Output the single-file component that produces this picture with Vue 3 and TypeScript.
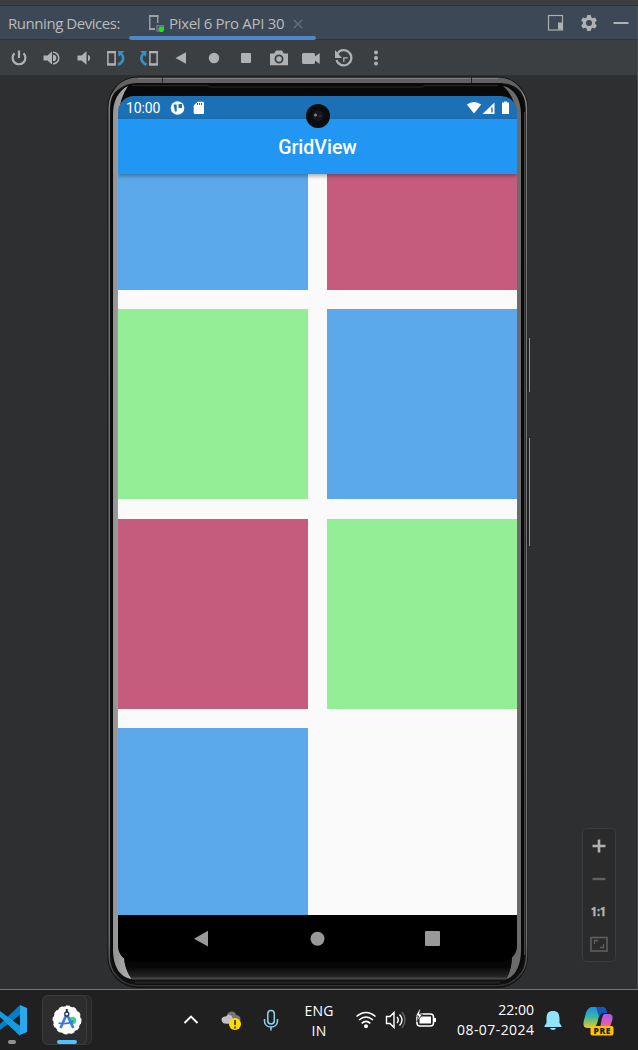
<script setup lang="ts">
const tiles: string[] = ['blue', 'rose', 'green', 'blue', 'rose', 'green', 'blue']
</script>

<template>
  <main class="desktop">
    <div class="strip"></div>
    <header class="tabs">
      <span class="caption">Running Devices:</span>
      <div class="tab">
        <svg class="tab-device" width="17" height="19" viewBox="0 0 17 19">
          <path d="M7 15H1.8V1.8H9.700V9" fill="none" stroke="#9ba3aa" stroke-width="1.4" />
          <path d="M1 1h9.400v2H1zM1 14h6v2H1z" fill="#9ba3aa" />
          <path d="M9 17V11.7h6.5V14M8.300 17H11" fill="none" stroke="#8566a5" stroke-width="1.4" />
          <circle cx="13.3" cy="15.2" r="2.800" fill="#00f800" />
        </svg>
        <span class="tab-name">Pixel 6 Pro API 30</span>
        <svg class="close" width="10" height="10" viewBox="0 0 10 10"><path d="M.7.7l8.6 8.6M9.3.7L.7 9.3" stroke="#66717a" stroke-width="1.3" /></svg>
      </div>
      <svg class="window-tools" width="84" height="20" viewBox="0 0 84 20">
        <rect x="1.5" y="2.5" width="14" height="14.5" fill="none" stroke="#a9adb0" stroke-width="1.2" />
        <path d="M11 9.500h4.500v7H11z" fill="#afb1b3" />
        <g transform="translate(42 10)" fill="#afb1b3">
          <path fill-rule="evenodd" d="M-1.7-8h3.4l.6 2.3 1.5.9L6.1-5.5l1.7 3L6.1-.8v1.600l1.7 1.7-1.7 3-2.300-.7-1.500.9-.6 2.300h-3.400l-.6-2.300-1.500-.9-2.300.7-1.700-3L-6.100.8V-.8l-1.700-1.700 1.700-3 2.300.7 1.500-.9zM0-3A3 3 0 1 0 0 3 3 3 0 1 0 0-3z" />
        </g>
        <path d="M66.500 9h15v2h-15z" fill="#afb1b3" />
      </svg>
    </header>

    <nav class="toolbar">
      <svg width="390" height="36" viewBox="0 0 390 36" fill="#afb1b3">
        <path d="M14.500 13.300A6.400 6.400 0 1 0 23.500 13.300M19 10.500V18" fill="none" stroke="#afb1b3" stroke-width="2.200" />
        <path d="M43.500 15.500h4l4.500-4v13l-4.500-4h-4z" />
        <path d="M53 12.200a5.800 5.800 0 0 1 0 11.600" fill="none" stroke="#afb1b3" stroke-width="1.500" />
        <path d="M53 14.700a3.300 3.300 0 0 1 0 6.600z" />
        <path d="M77.500 15.500h4l5-4.200v13.400l-5-4.200h-4z" />
        <path d="M88 14.700a3.600 3.600 0 0 1 0 6.600z" />
        <rect x="107.900" y="11.900" width="7.200" height="12.700" fill="none" stroke="#afb1b3" stroke-width="1.500" />
        <path d="M107.200 11h8.600v2.200h-8.600zM107.200 23.200h8.600v2.200h-8.600z" />
        <path d="M118 24.700c5.500-2.500 6.500-7 3.400-10.700" fill="none" stroke="#3592c4" stroke-width="2.600" />
        <path d="M118 11h6.500l-6 6z" fill="#3592c4" />
        <rect x="149.900" y="11.900" width="7.200" height="12.700" fill="none" stroke="#afb1b3" stroke-width="1.500" />
        <path d="M149.200 11h8.600v2.200h-8.600zM149.200 23.200h8.600v2.200h-8.600z" />
        <path d="M146.500 24.700c-5.500-2.500-6.500-7-3.400-10.700" fill="none" stroke="#3592c4" stroke-width="2.600" />
        <path d="M146.500 11H140l6 6z" fill="#3592c4" />
        <path d="M175.500 18l10.500-5.700v11.400z" />
        <circle cx="214" cy="18" r="5.200" />
        <rect x="241" y="13" width="10" height="10" rx=".8" />
        <path fill-rule="evenodd" d="M270 13.500h4.200l1.800-3h6l1.800 3h4.200v11.800h-18zM279 14.500a4.500 4.500 0 1 0 0 9 4.500 4.500 0 1 0 0-9z" />
        <circle cx="279" cy="19" r="2.700" />
        <path d="M303.500 13h10q1.500 0 1.500 1.500v2l4.700-3.500v11L315 20.500v2q0 1.500-1.500 1.500h-10q-1.500 0-1.500-1.500v-8q0-1.500 1.500-1.500z" />
        <path d="M337.500 13.500A7.600 7.600 0 1 1 336.500 20" fill="none" stroke="#afb1b3" stroke-width="2.200" />
        <path d="M335 10v8h7z" />
        <path d="M343.800 22v-4.200h4" fill="none" stroke="#afb1b3" stroke-width="1.300" />
        <circle cx="376" cy="12.500" r="2" /><circle cx="376" cy="18" r="2" /><circle cx="376" cy="23.500" r="2" />
      </svg>
    </nav>

    <section class="workspace">
      <div class="phone">
        <svg class="frame" width="424" height="913" viewBox="107 76 424 913">
          <defs>
            <linearGradient id="leftMetal" x2="1" y2="0"><stop stop-color="#929292" /><stop offset="1" stop-color="#b2b2b2" /></linearGradient>
            <linearGradient id="bottomGlass" x2="0" y2="1"><stop offset=".5" stop-color="#070707" /><stop offset=".88" stop-color="#242424" /><stop offset="1" stop-color="#555" /></linearGradient>
            <linearGradient id="rim" x2="0" y2="1"><stop stop-color="#999" /><stop offset=".05" stop-color="#777" /><stop offset=".95" stop-color="#707070" /><stop offset="1" stop-color="#303030" /></linearGradient>
          </defs>
          <rect x="107.500" y="76.500" width="420.500" height="911.500" rx="31" fill="#101010" />
          <rect x="109.200" y="78.700" width="417.300" height="907" rx="29" fill="none" stroke="url(#rim)" stroke-width="1.500" />
          <path d="M138 77.500H498C510 77.500 519 84 523 94C516 86 510 83 498 83H138C127 83 119 87 112 96C115 84 126 77.500 138 77.500Z" fill="#616161" />
          <path d="M138 78.500H498" stroke="#7b7b7b" />
          <rect x="111.500" y="83.500" width="412.500" height="896.500" rx="26" fill="#090909" />
          <path d="M524.500 112V955" stroke="#454545" />
          <path d="M128 86C118 91 113 101 113 114V950C113 966 120 978 132 979C126 971 124 962 124 954L118 945V118Q120 97 128 86Z" fill="url(#leftMetal)" />
          <path d="M503 86C514 88 521 99 521 114V950C521 966 515 977 506 979C511 970 512 962 512 954L517 945V118Q515 96 503 86Z" fill="#6b6b6b" />
          <path d="M124 954H512Q512 970 506 979.500H132Q124 970 124 954Z" fill="url(#bottomGlass)" />
          <path d="M162.500 77v6M471.500 77v6" stroke="#252525" />
          <path d="M132 85.500H207L210 87H422L425 85.500H498" fill="none" stroke="#292929" />
          <path d="M135 982.500H500" stroke="#252525" stroke-width="2" />
          <path d="M528 339V391M528 439V545" stroke="#171717" />
          <path d="M529.500 338V392M529.500 438V546" stroke="#96928e" />
        </svg>
        <div class="screen">
          <div class="status">
            <span class="clock">10:00</span>
            <svg class="status-left" width="36" height="16" viewBox="0 0 36 16">
              <circle cx="7.500" cy="8" r="6.800" fill="#fff" />
              <path d="M3.500 4.500h3.200v7H5zM8.500 4H12v4H8.500z" fill="#1c70b5" />
              <path d="M27.500 1.800H33q1 0 1 1V13q0 1-1 1h-8.300q-1 0-1-1V5.500z" fill="#fff" />
              <path d="M27.500 3v2M29.500 3v2M31.500 3v2" stroke="#1c70b5" />
            </svg>
            <svg class="status-right" width="46" height="16" viewBox="0 0 46 16" fill="#fff">
              <path d="M.8 4.500Q8-.5 15.200 4.500L8 13.500z" /><path d="M28.500 2.500v11.500h-12z" /><path d="M26 7.500v5" stroke="#1c70b5" stroke-width="1.400" />
              <path d="M36 2.500h2V1.500h3v1h2v11.500h-7z" />
            </svg>
          </div>
          <div class="appbar">GridView</div>
          <div class="grid-view">
            <div class="grid"><div v-for="(tile, i) in tiles" :key="i" class="tile" :class="tile"></div></div>
          </div>
          <svg class="android-nav" width="399" height="47" viewBox="0 0 399 47" fill="#999">
            <path d="M76 23.700l14-8v15.700z" /><circle cx="199.500" cy="23.700" r="7" /><rect x="307" y="16" width="15" height="15" rx="1" />
          </svg>
          <svg class="camera" width="26" height="26" viewBox="0 0 26 26"><circle cx="13" cy="13" r="12" fill="#0b0c0d" /><circle cx="13" cy="12.500" r="5.500" fill="#15171e" /><circle cx="10.500" cy="12" r="1.500" fill="#7d8791" /><circle cx="15" cy="13" r="1" fill="#263c78" /></svg>
        </div>
      </div>
      <svg class="zoom-panel" width="34" height="134" viewBox="0 0 34 134">
        <rect x=".5" y=".5" width="33" height="133" rx="4" fill="#2b2b2b" stroke="#3b3c3d" />
        <path d="M10.500 18h13M17 11.500v13" stroke="#afb1b3" stroke-width="2.600" />
        <path d="M10.500 51h13" stroke="#606162" stroke-width="2.400" />
        <text x="16.500" y="87.500" text-anchor="middle" textLength="15" lengthAdjust="spacingAndGlyphs">1:1</text>
        <rect x="9" y="109.500" width="16" height="13.500" fill="none" stroke="#5d5e5f" stroke-width="1.600" />
        <path d="M12.500 116v-3.500H16M18 119.500h3.500V116" fill="none" stroke="#606162" stroke-width="1.300" />
      </svg>
    </section>

    <footer class="taskbar">
      <svg class="apps" width="96" height="60" viewBox="0 0 96 60">
        <path d="M0 34L20 15V25L0 40Z" fill="#087cc5" /><path d="M0 21L20 36V46L0 27Z" fill="#159be0" />
        <path d="M20 15L27 18V42L20 45Z" fill="#29a9ed" />
        <rect x="8" y="50" width="8" height="4" rx="2" fill="#919191" />
        <rect x="46.500" y="5.500" width="45" height="49" rx="5" fill="#292929" stroke="#343434" />
        <rect x="42.500" y="5.500" width="44" height="49" rx="5" fill="#2d2d2d" stroke="#3c3c3c" />
        <circle cx="67" cy="30" r="13.700" fill="#fff" stroke="#fff" stroke-width="1.500" stroke-dasharray="4 3" />
        <circle cx="72.500" cy="30.500" r="3.800" fill="#37d982" />
        <path d="M66.800 24L60.500 38M66.800 24l6.500 14" stroke="#3f7ce8" stroke-width="2.700" /><path d="M58.500 33q8 2 15-2" fill="none" stroke="#3476de" stroke-width="1.800" />
        <path d="M66.800 19v4" stroke="#20364c" stroke-width="2" /><circle cx="66.800" cy="24" r="2" fill="#fff" stroke="#20364c" stroke-width="1.300" />
        <rect x="57" y="50" width="20" height="4" rx="2" fill="#4cc2ff" />
      </svg>
      <svg class="tray" width="104" height="60" viewBox="180 0 104 60">
        <path d="M184.500 33L191 26.500l6.500 6.500" fill="none" stroke="#fff" stroke-width="1.900" />
        <path d="M226 34h10c6 0 6-9 0-9-1-5-8-4-9 0z" fill="#777" /><path d="M224 33.500c-4-2-3-7.500 2-7 3-4 8-1 7 7z" fill="#c2c2c2" />
        <circle cx="235" cy="34" r="6" fill="#ffdb00" /><path d="M235 30v5M235 36.500v2" stroke="#222" stroke-width="1.500" />
        <g fill="none" stroke="#8bd5ea" stroke-width="1.500"><rect x="267.800" y="20.500" width="6.500" height="13.500" rx="3.200" /><path d="M264.500 29v2c0 8 13 8 13 0v-2M271 37v3.500" /></g>
      </svg>
      <div class="language"><span>ENG</span><span>IN</span></div>
      <svg class="system" width="86" height="60" viewBox="354 0 86 60" fill="none" stroke="#fff" stroke-width="1.600">
        <path d="M356.500 26.500q9.500-8 19 0M359 30q7-6 14 0M361.700 33.300q4.300-4 8.600 0" /><circle cx="366" cy="36.200" r="1.200" fill="#fff" />
        <path d="M386.500 26.500h3.500l4-4v15l-4-4h-3.500zM397 27q2.500 3 0 6M399.500 24.500q5 5.500 0 11" stroke-width="1.400" /><path d="M402 22q6 8 0 16" stroke="#666" stroke-width="1.300" />
        <rect x="417" y="24" width="16.500" height="12" rx="3" /><path d="M419.500 26.500h11.500v7h-11.500z" fill="#fff" stroke="none" /><path d="M435 28v4" stroke-width="2" />
        <path d="M419.500 19l-4 7h3l-1.500 6 5.500-8h-3l1-5z" fill="#fff" stroke="#202020" stroke-width=".8" />
      </svg>
      <div class="datetime"><span class="time">22:00</span><span class="date">08-07-2024</span></div>
      <svg class="notify" width="96" height="60" viewBox="542 0 96 60">
        <defs>
          <linearGradient id="ribbonLeft" x2="0" y2="1"><stop stop-color="#1b8eed" /><stop offset=".45" stop-color="#35b7a5" /><stop offset="1" stop-color="#e8ca24" /></linearGradient>
          <linearGradient id="ribbonRight" x2="0" y2="1"><stop stop-color="#a55bed" /><stop offset=".6" stop-color="#e45bb0" /><stop offset="1" stop-color="#fc8b55" /></linearGradient>
        </defs>
        <path d="M553 21c-5 0-6.500 3-6.500 8v4l-2 3v1h17v-1l-2-3v-4c0-5-1.500-8-6.500-8zM550 38h6q-.5 2-3 2t-3-2z" fill="#91e4ff" />
        <path d="M591 17h11c3 0 4 2 5 6h-4c-3 0-4 3-5 7-1 5-3 8-7 8h-4c-4 0-4-4-3-8 2-6 2-11 7-13z" fill="url(#ribbonLeft)" />
        <path d="M596 17h6c3 0 4 2 5 6h-4q-3 0-4 4z" fill="#1854bd" />
        <path d="M604 24h5c4 0 4 3 3 7-2 6-3 9-7 9h-6q1-1 2-7 1-7 3-9z" fill="url(#ribbonRight)" />
        <rect x="590.500" y="36" width="23" height="9.500" rx="2" fill="#ffc400" /><text x="602" y="43.500" text-anchor="middle" textLength="17">PRE</text>
      </svg>
    </footer>
  </main>
</template>

<style>
body { margin: 0; background: #202020; }
</style>
<style scoped>
* { box-sizing: border-box; }
svg { display: block; flex: none; }
.desktop { width: 638px; height: 1050px; overflow: hidden; font-family: "Open Sans", "Noto Sans", sans-serif; background: #2e2f31; }
.strip { height: 6px; background: #3c3f41; border-bottom: 1px solid #303236; }
.tabs { height: 34px; display: flex; background: #3d4856; color: #bbb; border-bottom: 1px solid #313336; border-right: 1px solid #4c5057; font-size: 15px; line-height: 34px; }
.caption { width: 129px; padding-left: 8px; letter-spacing: -.45px; white-space: nowrap; }
.tab { width: 187px; height: 34px; display: flex; position: relative; padding-left: 19px; }
.tab::after { content: ""; position: absolute; left: 0; right: 0; bottom: 0; height: 4px; border-radius: 2px; background: #4a88c7; }
.tab-device { margin-top: 8px; }
.tab-name { width: 120px; margin-left: 4px; letter-spacing: -.33px; white-space: nowrap; }
.close { margin: 13px 0 0 4px; }
.window-tools { margin: 7px 6px 0 auto; }
.toolbar { height: 35px; background: #3c3f41; border-right: 1px solid #4b4e50; }
.workspace { position: relative; height: 915px; background: #2e2f31; border-bottom: 1px solid #777; border-right: 1px solid #48494b; }
.phone { position: absolute; left: 107px; top: 1px; width: 424px; height: 913px; padding: 20px 14px 26px 11px; }
.frame { position: absolute; left: 0; top: 0; }
.screen { position: relative; width: 399px; height: 866px; overflow: hidden; border-radius: 16px; display: flex; flex-direction: column; }
.status { height: 23px; flex: none; display: flex; align-items: center; background: #1c70b5; color: #fff; font-family: Roboto, sans-serif; }
.clock { width: 44px; padding-left: 8px; font-size: 14px; letter-spacing: -.15px; padding-top: 1px; }
.status-left { margin-left: 8px; }
.status-right { margin-left: auto; margin-right: 5px; }
.appbar { height: 55px; flex: none; z-index: 1; background: #2196f3; box-shadow: 0 2px 4px #0005; color: #fff; text-align: center; font: 500 19.500px/58px Roboto, sans-serif; }
.grid-view { height: 741px; flex: none; overflow: hidden; display: flex; align-items: flex-end; background: #fafafa; }
.grid { width: 399px; margin-bottom: -3.400px; display: grid; grid-template-columns: 190px 190px; grid-auto-rows: 190px; gap: 19.500px 19px; }
.blue { background: #5ba9eb; }
.rose { background: #c55c7e; }
.green { background: #94ee96; }
.android-nav { background: #000; }
.camera { position: absolute; left: 187px; top: 7px; z-index: 2; }
.zoom-panel { position: absolute; left: 582px; top: 753px; }
.zoom-panel text { font: 900 13px Roboto, sans-serif; fill: #afb1b3; stroke: #afb1b3; stroke-width: .5px; }
.taskbar { height: 60px; display: flex; align-items: center; background: #202020; color: #fff; }
.tray { margin-left: 84px; }
.language, .datetime { display: flex; flex-direction: column; font-size: 14px; line-height: 20px; }
.language { width: 54px; margin-left: 8px; align-items: center; padding-top: 1px; letter-spacing: .2px; }
.system { margin-left: 8px; }
.datetime { width: 94px; align-items: flex-end; letter-spacing: 0; }
.date { letter-spacing: .43px; margin-right: -.43px; }
.notify { margin-left: 8px; }
.notify text { font: 800 8.500px "Open Sans", sans-serif; fill: #242424; }
</style>
